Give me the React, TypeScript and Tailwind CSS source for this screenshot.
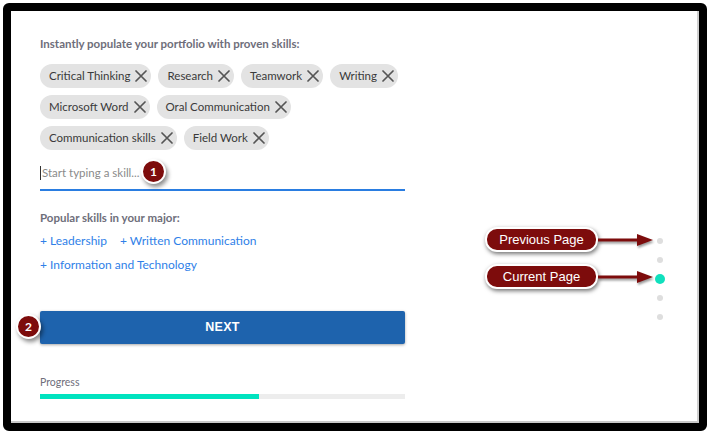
const skills = [
    ['Critical Thinking', 'Research', 'Teamwork', 'Writing'],
    ['Microsoft Word', 'Oral Communication'],
    ['Communication skills', 'Field Work'],
]

function Chip({ label }: { label: string }) {
    return (
        <div className="flex h-[24px] shrink-0 items-center gap-[5px] whitespace-nowrap rounded-full bg-[#e3e3e3] pl-[9px] pr-[4px] text-[11.5px] text-[#3a3a3a]">
            <span>{label}</span>
            <svg width="12" height="12" viewBox="0 0 12 12" className="text-[#555]">
                <path d="M1 1 L11 11 M11 1 L1 11" stroke="currentColor" strokeWidth="1.7" strokeLinecap="round" />
            </svg>
        </div>
    )
}

function StepBadge({ n, className }: { n: number; className: string }) {
    return (
        <div
            className={`absolute flex h-[25px] w-[25px] items-center justify-center rounded-full border-[2px] border-white bg-[#7d0c0c] text-[12px] font-bold text-white shadow-[2px_3px_4px_rgba(0,0,0,0.45)] ${className}`}
        >
            {n}
        </div>
    )
}

function Callout({ label, top }: { label: string; top: string }) {
    return (
        <div className={`absolute left-[485px] flex items-center ${top}`}>
            <div className="flex h-[25px] w-[113px] items-center justify-center rounded-[12px] border-[2px] border-white bg-[#7d0c0c] text-[13px] text-white shadow-[1px_2px_4px_rgba(0,0,0,0.55)] [font-family:'Liberation_Sans',Arial,sans-serif]">
                {label}
            </div>
            <svg width="56" height="16" viewBox="0 0 56 16" className="drop-shadow-[1px_2px_1px_rgba(0,0,0,0.4)]">
                <rect x="0" y="6.5" width="40" height="3" fill="#7d0c0c" />
                <polygon points="39,2 55,8 39,14" fill="#7d0c0c" />
            </svg>
        </div>
    )
}

export default function App() {
    return (
        <div className="relative h-[434px] w-[710px] overflow-hidden bg-white p-[3px] [font-family:Lato,'Open_Sans',sans-serif]">
            <div className="h-[428px] w-[704px] rounded-[6px] border-[8px] border-black">
                <div className="flex h-full border-b-[2px] border-r-[2px] border-b-[#c9c9c9] border-r-[#cfcfcf] bg-white">
                    {/* main column */}
                    <div className="ml-[29px] flex w-[365px] flex-col pt-[26px]">
                        <p className="text-[11.5px] leading-[14px] font-bold text-[#6e6e7a]">
                            Instantly populate your portfolio with proven skills:
                        </p>

                        <div className="mt-[13px] flex flex-col gap-[7px]">
                            {skills.map((row, i) => (
                                <div key={i} className="flex gap-[7px]">
                                    {row.map(s => (
                                        <Chip key={s} label={s} />
                                    ))}
                                </div>
                            ))}
                        </div>

                        <div className="mt-[12px] border-b-[2px] border-[#2a7de1] pb-[5px]">
                            <div className="flex h-[22px] items-center">
                                <span className="mr-[1px] h-[14px] w-[1px] bg-[#333]" />
                                <span className="text-[11.5px] text-[#8a8a8a]">Start typing a skill...</span>
                            </div>
                        </div>

                        <p className="mt-[20px] text-[11.5px] leading-[14px] font-bold text-[#6e6e7a]">
                            Popular skills in your major:
                        </p>
                        <div className="mt-[8px] flex gap-[13px] text-[12px] leading-[16px] text-[#2f7fe8]">
                            <span>+ Leadership</span>
                            <span>+ Written Communication</span>
                        </div>
                        <div className="mt-[8px] text-[12px] leading-[16px] text-[#2f7fe8]">
                            <span>+ Information and Technology</span>
                        </div>

                        <button className="mt-[38px] flex h-[33px] items-center justify-center rounded-[2px] bg-[#1e63ad] text-[12.5px] font-bold tracking-[0.3px] text-white shadow-[0_1px_3px_rgba(0,0,0,0.35)] [font-family:'Liberation_Sans',Arial,sans-serif]">
                            NEXT
                        </button>

                        <p className="mt-[32px] text-[10.5px] leading-[12px] text-[#6e6e7a]">Progress</p>
                        <div className="mt-[6px] h-[5px] w-full bg-[#ededed]">
                            <div className="h-full bg-[#00e3bf]" style={{ width: '60%' }} />
                        </div>
                    </div>

                    {/* page dots */}
                    <div className="ml-auto mr-[32px] mt-[220px] flex w-[10px] flex-col">
                        {[0, 1, 2, 3, 4].map(i => (
                            <div key={i} className="flex h-[19px] items-center justify-center">
                                {i === 2 ? (
                                    <span className="h-[10px] w-[10px] rounded-full bg-[#10e0bd]" />
                                ) : (
                                    <span className="h-[6px] w-[6px] rounded-full bg-[#dedede]" />
                                )}
                            </div>
                        ))}
                    </div>
                </div>
            </div>

            {/* annotations */}
            <StepBadge n={1} className="left-[141px] top-[159px]" />
            <StepBadge n={2} className="left-[16px] top-[314px]" />
            <Callout label="Previous Page" top="top-[227px]" />
            <Callout label="Current Page" top="top-[264px]" />
        </div>
    )
}
